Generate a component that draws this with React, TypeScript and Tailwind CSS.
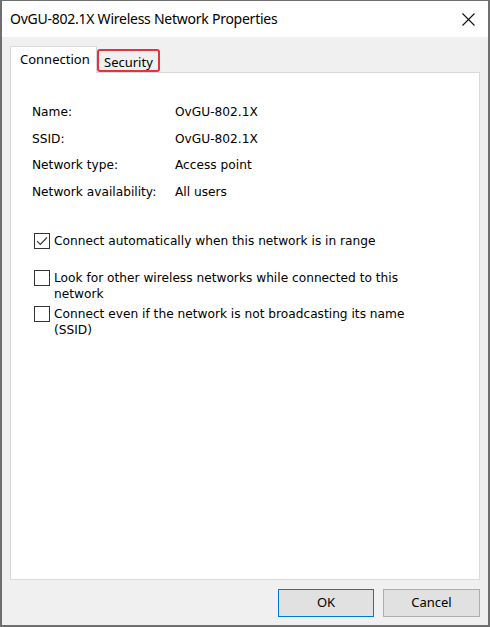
import { useState } from "react";

const rows = [
  ["Name:", "OvGU-802.1X"],
  ["SSID:", "OvGU-802.1X"],
  ["Network type:", "Access point"],
  ["Network availability:", "All users"],
];

function CheckBox({ checked, onClick }: { checked: boolean; onClick: () => void }) {
  return (
    <button
      type="button"
      onClick={onClick}
      className="w-[16px] h-[16px] shrink-0 border border-[#333] bg-white flex items-center justify-center"
    >
      {checked && (
        <svg width="12" height="10" viewBox="0 0 12 10" fill="none">
          <path d="M1 5.2 L4.3 8.5 L11 1.5" stroke="#333" strokeWidth="1.1" />
        </svg>
      )}
    </button>
  );
}

export default function App() {
  const [opts, setOpts] = useState([true, false, false]);
  const toggle = (i: number) => setOpts((o) => o.map((v, j) => (j === i ? !v : v)));

  const labels = [
    "Connect automatically when this network is in range",
    "Look for other wireless networks while connected to this network",
    "Connect even if the network is not broadcasting its name (SSID)",
  ];

  return (
    <div className="w-[490px] h-[627px] flex flex-col border-t border-x-2 border-b-2 border-[#6f6f6f] bg-[#f0f0f0] font-['Noto_Sans',sans-serif] text-[#000]">
      {/* title bar */}
      <div className="h-[36px] shrink-0 bg-white flex items-center justify-between pl-[8px] pr-[13px]">
        <span className="text-[14px] leading-none tracking-[-0.25px]">
          OvGU-802.1X Wireless Network Properties
        </span>
        <svg width="13" height="13" viewBox="0 0 13 13">
          <path d="M0.5 0.5 L12.5 12.5 M12.5 0.5 L0.5 12.5" stroke="#111" strokeWidth="1.1" />
        </svg>
      </div>

      {/* body */}
      <div className="flex-1 flex flex-col px-[8px] pt-[9px] pb-[8px]">
        {/* tabs */}
        <div className="h-[26px] shrink-0 flex items-end">
          <div className="relative z-10 -mb-px w-[87px] h-[27px] pl-[9px] bg-white border-t border-x border-[#d9d9d9] text-[13px] leading-none pt-[6px]">
            Connection
          </div>
          <div className="h-[23px] px-[5px] border-2 border-[#e0353b] rounded-[3px] text-[13px] leading-none pt-[5px]">
            Security
          </div>
        </div>

        {/* panel */}
        <div className="flex-1 bg-white border border-[#d9d9d9] pl-[21px] pt-[26px] font-['DejaVu_Sans',sans-serif] text-[12.2px]">
          {rows.map(([k, v]) => (
            <div key={k} className="h-[26.5px] flex items-center">
              <span className="w-[143px]">{k}</span>
              <span>{v}</span>
            </div>
          ))}

          <div className="mt-[28px] flex flex-col pl-[2px]">
            {labels.map((t, i) => (
              <div
                key={t}
                className={`flex items-start gap-[4px] ${i === 0 ? "" : i === 1 ? "mt-[21px]" : "mt-[4px]"}`}
              >
                <CheckBox checked={opts[i]} onClick={() => toggle(i)} />
                <span className="w-[366px] leading-[16px]">{t}</span>
              </div>
            ))}
          </div>
        </div>

        {/* buttons */}
        <div className="mt-[9px] h-[28px] shrink-0 flex justify-end gap-[9px] text-[13px]">
          <button type="button" className="w-[96px] h-[28px] bg-[#e1e1e1] border border-[#0078d7]">
            OK
          </button>
          <button type="button" className="w-[97px] h-[28px] bg-[#e1e1e1] border border-[#adadad]">
            Cancel
          </button>
        </div>
      </div>
    </div>
  );
}
